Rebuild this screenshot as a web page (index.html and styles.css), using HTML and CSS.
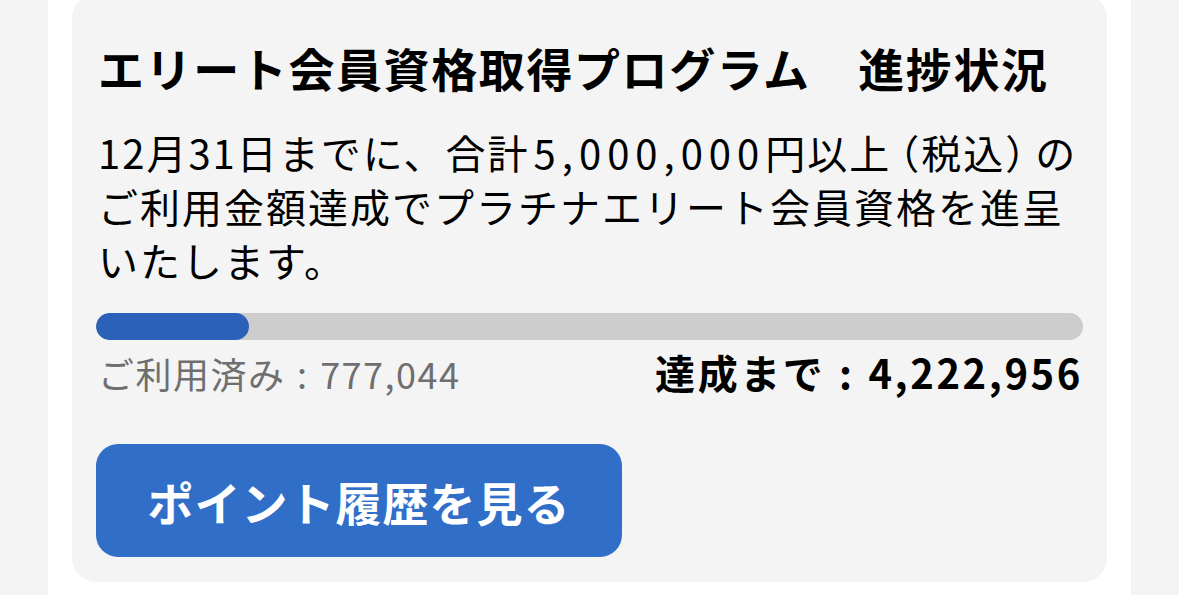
FILE: index.html
```html
<!DOCTYPE html>
<html lang="ja">
<head>
<meta charset="utf-8">
<link rel="stylesheet" href="styles.css">
</head>
<body>
<div class="page">
  <section class="card">
    <h1 class="title">エリート会員資格取得プログラム　進捗状況</h1>
    <p class="desc">12月31日までに、合計<span class="num">5,000,000</span>円以上<span class="po">（</span>税込<span class="pc">）</span>のご利用金額達成でプラチナエリート会員資格を進呈いたします。</p>
    <div class="track"><div class="fill" style="width:15.5%"></div></div>
    <div class="stats">
      <span class="used">ご利用済み : 777,044</span>
      <span class="remain">達成まで : 4,222,956</span>
    </div>
    <button class="btn">ポイント履歴を見る</button>
  </section>
</div>
</body>
</html>
```

FILE: styles.css
```css
html, body {
  margin: 0;
  padding: 0;
  background: #f4f4f4;
  height: 595px;
  overflow: hidden;
}
body {
  font-family: "Noto Sans CJK JP", "Noto Sans", sans-serif;
  color: #000;
}
.page {
  margin: 0 48px;
  background: #fff;
  padding: 0 24px;
  height: 595px;
}
.card {
  position: relative;
  top: -6px;
  background: #f4f4f4;
  border-radius: 24px;
  padding: 50px 24px 22px 26px;
  height: 588px;
  box-sizing: border-box;
}
.title {
  margin: 0;
  font-size: 46px;
  line-height: 46px;
  font-weight: 700;
  letter-spacing: 1.6px;
  white-space: nowrap;
}
.desc {
  margin: 35px 0 0;
  font-size: 40px;
  line-height: 54px;
  letter-spacing: 2px;
}
.num {
  letter-spacing: 6px;
  margin-left: 4px;
}
.po, .pc {
  font-feature-settings: "halt";
}
.po {
  margin-left: 8px;
}
.pc {
  margin-right: 8px;
}
.track {
  margin: 26px 0 0 -2px;
  height: 27px;
  border-radius: 14px;
  background: #cdcdcd;
  overflow: hidden;
}
.fill {
  height: 100%;
  background: #2b61b8;
  border-radius: 14px;
}
.stats {
  display: flex;
  justify-content: space-between;
  align-items: baseline;
  margin-top: 9px;
}
.used {
  font-size: 36px;
  line-height: 46px;
  color: #6f6f6f;
  letter-spacing: 1.5px;
  word-spacing: 2px;
}
.remain {
  font-size: 40px;
  line-height: 46px;
  font-weight: 700;
  letter-spacing: 2.6px;
  word-spacing: 2px;
}
.btn {
  display: flex;
  align-items: center;
  justify-content: center;
  margin: 48px 0 0 -2px;
  width: 526px;
  height: 113px;
  border: none;
  border-radius: 22px;
  background: #306ec8;
  color: #fff;
  font-family: inherit;
  font-size: 46px;
  font-weight: 700;
  letter-spacing: 1px;
  padding: 0;
}
```
